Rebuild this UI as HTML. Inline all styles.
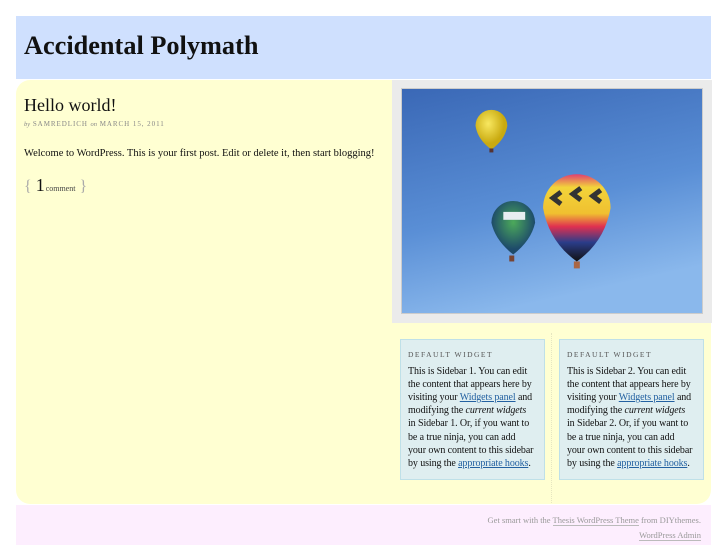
<!DOCTYPE html>
<html><head><meta charset="utf-8"><style>
*{margin:0;padding:0;box-sizing:border-box}
body{width:727px;height:545px;background:#fff;font-family:"Liberation Serif",serif;color:#111;position:relative;overflow:hidden}
.hdr{position:absolute;left:16px;top:16px;width:695px;height:63px;background:#cfe0fe}
.hdr h1{position:absolute;left:8px;top:15px;font-size:26.3px;font-weight:bold;letter-spacing:0}
.main{position:absolute;left:16px;top:80px;width:695px;height:424px;background:#ffffd2;border-radius:14px}
.post{position:absolute;left:24px;top:95px}
.post h2{font-size:18px;font-weight:normal}
.meta{font-size:7px;color:#888;letter-spacing:0.95px;margin-top:4px}
.meta i{letter-spacing:0;font-size:6.5px}
.txt{position:absolute;left:24px;top:148px;font-size:10.5px}
.cm{position:absolute;left:24px;top:175px;color:#aaa;font-size:16px}
.cm b{font-weight:normal;color:#111;font-size:18px;margin:0 1px 0 0}
.cm small{font-size:8px;color:#444}
.imgbox{position:absolute;left:392px;top:80px;width:320px;height:243px;background:#ebebeb}
.img{position:absolute;left:401px;top:88px;width:302px;height:226px;border:1px solid #ccc}
.w{position:absolute;top:339px;width:145px;height:141px;background:#dfeef0;border:1px solid #bfe0e8;padding:8px 0 8px 7px;font-size:10px;line-height:13.1px;white-space:nowrap;letter-spacing:-0.1px}
.w h3{font-weight:normal;font-size:7.5px;letter-spacing:1.5px;color:#555;margin-bottom:4px}
a{color:#2361a1;text-decoration:underline}
.div{position:absolute;left:551px;top:333px;width:0;height:170px;border-left:1px dotted #e6e6c0}
.ft{position:absolute;left:16px;top:505px;width:695px;height:40px;background:#fdeefe;text-align:right;padding-right:10px;font-size:8.5px;color:#999;line-height:15px;padding-top:8px}
.ft u{text-decoration:none;border-bottom:1px solid #bbb}
</style></head><body>
<div class="hdr"><h1>Accidental Polymath</h1></div>
<div class="main"></div>
<div class="post"><h2>Hello world!</h2><div class="meta"><i>by</i> SAMREDLICH <i>on</i> MARCH 15, 2011</div></div>
<div class="txt">Welcome to WordPress. This is your first post. Edit or delete it, then start blogging!</div>
<div class="cm">{ <b>1</b><small>comment</small> }</div>
<div class="imgbox"></div>
<svg class="img" viewBox="0 0 302 226" preserveAspectRatio="none">
<defs>
<linearGradient id="sky" x1="0" y1="0" x2="0.3" y2="1"><stop offset="0" stop-color="#3a68b6"/><stop offset="0.6" stop-color="#5a8fd6"/><stop offset="1" stop-color="#8ab8ec"/></linearGradient>
<linearGradient id="big" x1="0" y1="0" x2="0" y2="1"><stop offset="0" stop-color="#e04070"/><stop offset="0.15" stop-color="#f2d43a"/><stop offset="0.45" stop-color="#f0c030"/><stop offset="0.6" stop-color="#e03050"/><stop offset="0.78" stop-color="#2b3d8a"/><stop offset="1" stop-color="#111"/></linearGradient>
<radialGradient id="yel" cx="0.4" cy="0.35"><stop offset="0" stop-color="#f8e860"/><stop offset="1" stop-color="#c9aa10"/></radialGradient>
<radialGradient id="grn" cx="0.5" cy="0.4"><stop offset="0" stop-color="#4caa5a"/><stop offset="1" stop-color="#1d4a6a"/></radialGradient>
</defs>
<rect width="302" height="226" fill="url(#sky)"/>
<path d="M74 37 a16 16 0 1 1 32 0 q-2 14 -16 24 q-14 -10 -16 -24z" fill="url(#yel)"/>
<rect x="88" y="60" width="4" height="4" fill="#533"/>
<path d="M90 135 a22 22 0 1 1 44 0 q-4 18 -22 32 q-18 -14 -22 -32z" fill="url(#grn)"/>
<rect x="102" y="124" width="22" height="8" fill="#e8eef0"/>
<rect x="108" y="168" width="5" height="6" fill="#743"/>
<path d="M142 120 a34 34 0 1 1 68 0 q-6 34 -34 54 q-28 -20 -34 -54z" fill="url(#big)"/>
<path d="M160 104 l-8 6 8 6 M180 100 l-8 6 8 6 M200 102 l-8 6 8 6" stroke="#333" stroke-width="5" fill="none"/>
<rect x="173" y="174" width="6" height="7" fill="#a64"/>
</svg>
<div class="w" style="left:400px"><h3>DEFAULT WIDGET</h3>This is Sidebar 1. You can edit<br>the content that appears here by<br>visiting your <a>Widgets panel</a> and<br>modifying the <i>current widgets</i><br>in Sidebar 1. Or, if you want to<br>be a true ninja, you can add<br>your own content to this sidebar<br>by using the <a>appropriate hooks</a>.</div>
<div class="div"></div>
<div class="w" style="left:559px"><h3>DEFAULT WIDGET</h3>This is Sidebar 2. You can edit<br>the content that appears here by<br>visiting your <a>Widgets panel</a> and<br>modifying the <i>current widgets</i><br>in Sidebar 2. Or, if you want to<br>be a true ninja, you can add<br>your own content to this sidebar<br>by using the <a>appropriate hooks</a>.</div>
<div class="ft">Get smart with the <u>Thesis WordPress Theme</u> from DIYthemes.<br><u>WordPress Admin</u></div>
</body></html>
